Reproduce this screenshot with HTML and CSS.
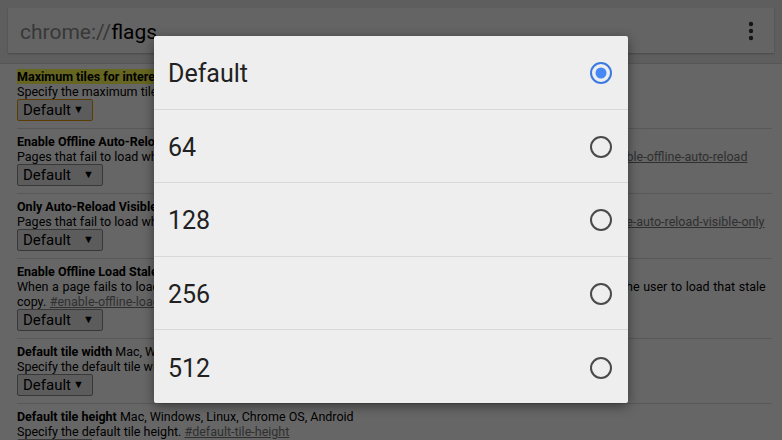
FILE: index.html
```html
<!DOCTYPE html>
<html lang="en">
<head>
    <meta charset="UTF-8">
    <title>chrome://flags</title>
    <link rel="stylesheet" href="styles.css">
</head>
<body>
<div class="page">
    <div class="toolbar">
        <div class="omnibox">
            <span class="url"><span class="scheme">chrome://</span>flags</span>
            <svg class="menu" width="6" height="20" viewBox="0 0 6 20">
                <circle cx="3" cy="3" r="2.2"/>
                <circle cx="3" cy="10" r="2.2"/>
                <circle cx="3" cy="17" r="2.2"/>
            </svg>
        </div>
    </div>

    <div class="flags">
        <div class="flag">
            <div class="name"><span class="hl"><b>Maximum tiles for interest area</b></span> Mac, Windows, Linux, Chrome OS, Android</div>
            <div class="desc">Specify the maximum tiles for interest area. <a href="javascript:;">#max-tiles-for-interest-area</a></div>
            <div class="sel focus">Default<span class="arr">&#9660;</span></div>
        </div>
        <div class="flag">
            <div class="name"><b>Enable Offline Auto-Reload Mode</b> Mac, Windows, Linux, Chrome OS, Android</div>
            <div class="desc">Pages that fail to load while the browser is offline will be auto-reloaded when the browser is online again. <a href="javascript:;">#enable-offline-auto-reload</a></div>
            <div class="sel wide">Default<span class="arr">&#9660;</span></div>
        </div>
        <div class="flag">
            <div class="name"><b>Only Auto-Reload Visible Tabs</b> Mac, Windows, Linux, Chrome OS, Android</div>
            <div class="desc">Pages that fail to load while the browser is offline will only be auto-reloaded if their tab is visible. <a href="javascript:;">#enable-offline-auto-reload-visible-only</a></div>
            <div class="sel wide">Default<span class="arr">&#9660;</span></div>
        </div>
        <div class="flag">
            <div class="name"><b>Enable Offline Load Stale Button</b> Mac, Windows, Linux, Chrome OS, Android</div>
            <div class="desc loose">When a page fails to load, if a stale copy of the page exists in the cache, a button will be presented to allow the user to load that stale<br>copy. <a href="javascript:;">#enable-offline-load-stale-cache</a></div>
            <div class="sel wide">Default<span class="arr">&#9660;</span></div>
        </div>
        <div class="flag">
            <div class="name"><b>Default tile width</b> Mac, Windows, Linux, Chrome OS, Android</div>
            <div class="desc">Specify the default tile width. <a href="javascript:;">#default-tile-width</a></div>
            <div class="sel">Default<span class="arr">&#9660;</span></div>
        </div>
        <div class="flag">
            <div class="name"><b>Default tile height</b> Mac, Windows, Linux, Chrome OS, Android</div>
            <div class="desc">Specify the default tile height. <a href="javascript:;">#default-tile-height</a></div>
            <div class="sel">Default<span class="arr">&#9660;</span></div>
        </div>
    </div>

    <!-- dim layer + option picker -->
    <div class="dim"></div>
    <ul class="dialog">
        <li>Default<svg class="radio on" width="24" height="24" viewBox="0 0 24 24"><circle class="ring" cx="12" cy="12" r="10"/><circle class="dot" cx="12" cy="12" r="5.5"/></svg></li>
        <li>64<svg class="radio" width="24" height="24" viewBox="0 0 24 24"><circle class="ring" cx="12" cy="12" r="10"/></svg></li>
        <li>128<svg class="radio" width="24" height="24" viewBox="0 0 24 24"><circle class="ring" cx="12" cy="12" r="10"/></svg></li>
        <li>256<svg class="radio" width="24" height="24" viewBox="0 0 24 24"><circle class="ring" cx="12" cy="12" r="10"/></svg></li>
        <li>512<svg class="radio" width="24" height="24" viewBox="0 0 24 24"><circle class="ring" cx="12" cy="12" r="10"/></svg></li>
    </ul>
</div>
</body>
</html>
```

FILE: styles.css
```css
html,body{
    width: 100%;
    height: 100%;
    overflow: hidden;
}
*{
    margin:0;
    padding:0;
    list-style: none;
    box-sizing: border-box;
}
body{
    font-family: Roboto, "Liberation Sans", sans-serif;
    color: #000;
    background: #fff;
}
a{
    color: #777;
    text-decoration: underline;
}
.page{
    position: relative;
    width: 782px;
    height: 440px;
    overflow: hidden;
}
.toolbar{
    height: 64px;
    padding: 8px 8px 10px;
    background: #ececec;
    border-bottom: 1px solid #d8d8d8;
}
.omnibox{
    height: 45px;
    background: #fbfbfb;
    box-shadow: 0 1px 2px rgba(0,0,0,.25);
    display: flex;
    align-items: center;
    justify-content: space-between;
    padding: 3px 20px 0 12px;
}
.url{
    font-size: 21px;
    color: #000;
}
.scheme{
    color: #8c8c8c;
}
.menu{
    fill: #333;
    margin-top: -3px;
}
.flags{
    padding: 0 10px 0 17px;
}
.flag{
    padding: 5px 0 7px;
    border-bottom: 1px solid #dcdcdc;
    font-size: 12.5px;
    line-height: 15px;
}
.name,.desc{
    white-space: nowrap;
}
.desc.loose{
    word-spacing: 0.5px;
}
.hl{
    background: #ffff50;
}
.sel{
    width: 76px;
    height: 22px;
    display: flex;
    align-items: center;
    justify-content: space-between;
    padding: 0 8px 0 5px;
    border: 1px solid #8c8c8c;
    border-radius: 2px;
    background: #e6e6e6;
    font-size: 15px;
    line-height: 20px;
}
.sel.wide{
    width: 86px;
}
.sel.focus{
    border-color: #e69a00;
}
.arr{
    font-size: 11px;
}
.dim{
    position: absolute;
    left: 0;
    top: 0;
    width: 100%;
    height: 100%;
    background: rgba(0,0,0,.6);
}
.dialog{
    position: absolute;
    left: 154px;
    top: 36px;
    width: 474px;
    height: 367px;
    background: #eeeeee;
    border-radius: 2px;
    box-shadow: 0 3px 12px rgba(0,0,0,.45);
    display: flex;
    flex-direction: column;
}
.dialog li{
    flex: 1;
    display: flex;
    align-items: center;
    justify-content: space-between;
    padding: 3px 15px 0 14px;
    font-size: 25px;
    color: #212121;
    border-top: 1px solid #d8d8d8;
}
.dialog li:first-child{
    border-top: 0;
}
.radio{
    margin-top: -1px;
}
.radio .ring{
    fill: none;
    stroke: #4a4a4a;
    stroke-width: 2;
}
.radio.on .ring{
    stroke: #3b7be0;
}
.radio .dot{
    fill: #4589f4;
}
```
